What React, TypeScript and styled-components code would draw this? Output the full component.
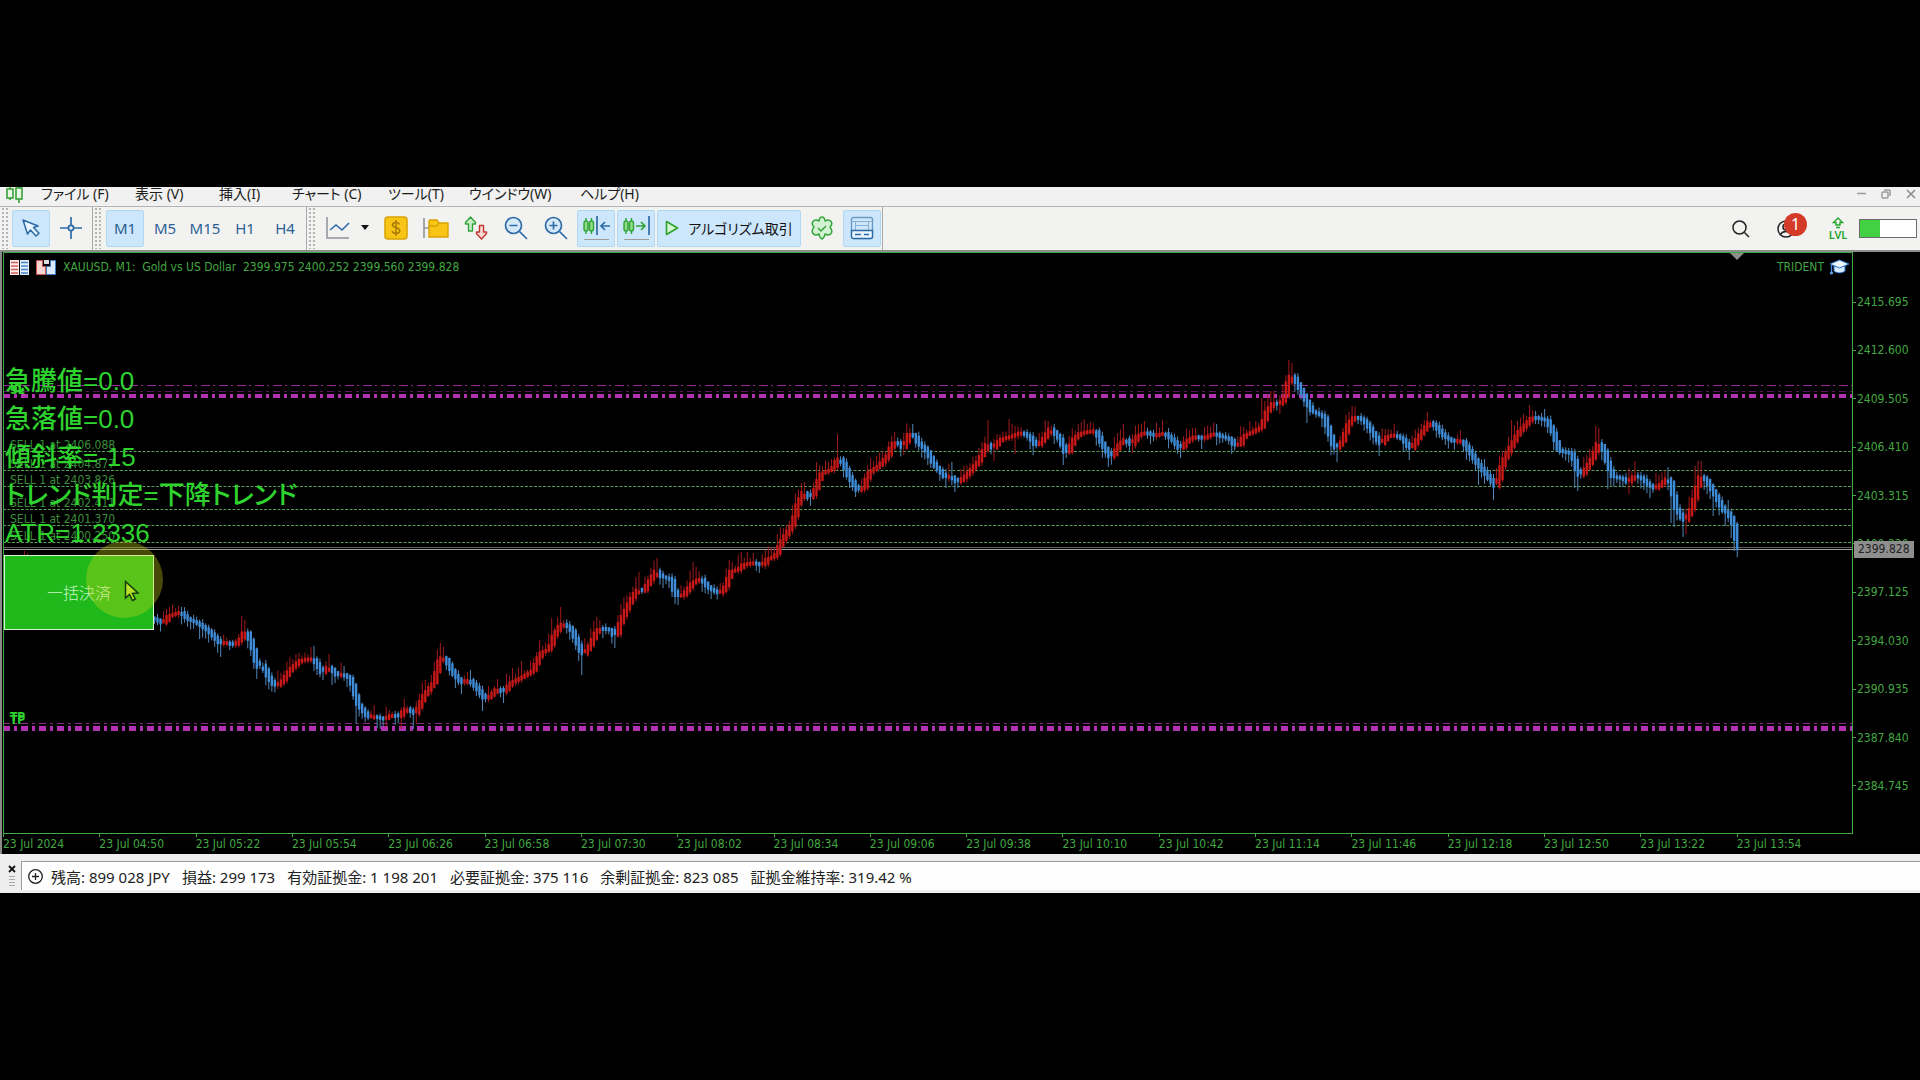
import React from 'react';
import styled, { createGlobalStyle } from 'styled-components';

const UI_FONT = `'Noto Sans', 'Noto Sans CJK JP', sans-serif`;
const CHART_FONT = `'DejaVu Sans Condensed', 'Noto Sans', 'Noto Sans CJK JP', sans-serif`;
const LABEL_FONT = `'Liberation Sans', 'Noto Sans CJK JP', sans-serif`;

const GlobalStyle = createGlobalStyle`
  * { box-sizing: border-box; }
  body { margin: 0; background: #000; }
  button { font: inherit; margin: 0; cursor: default; }
`;

const Page = styled.div`
  min-height: 100vh;
  display: flex;
  flex-direction: column;
  justify-content: center;
  background: #000;
  font-family: ${UI_FONT};
  overflow: hidden;
`;

const Terminal = styled.main`
  display: flex;
  flex-direction: column;
  background: #f0f0ef;
`;

/* ---------- menu ---------- */
const MenuBar = styled.header`
  display: flex;
  align-items: flex-start;
  height: 20px;
  padding: 0 4px 0 5px;
  border-bottom: 1px solid #b4b4b4;
  background: #f0f1f0;
`;

const MenuList = styled.nav`
  display: grid;
  flex: 1;
  grid-template-columns: 94px 84px 73px 96px 81px 111px auto;
  justify-content: start;
  justify-items: start;
  margin-left: 17px;
`;

const MenuItem = styled.button`
  border: 0;
  padding: 0;
  background: none;
  color: #1c1c1c;
  font-size: 14px;
  line-height: 14px;
  font-feature-settings: 'palt';
  white-space: pre;
`;

const WindowButtons = styled.div`
  display: flex;
  gap: 9px;
`;

const WindowButton = styled.button`
  display: flex;
  border: 0;
  padding: 0;
  background: none;
`;

/* ---------- toolbar ---------- */
const ToolBar = styled.div`
  display: flex;
  align-items: center;
  height: 43px;
  padding-right: 3px;
  background: #f2f2f1;
`;

const ToolGroup = styled.div<{ $lead: number; $tail: number }>`
  display: flex;
  align-items: center;
  gap: 2px;
  height: 43px;
  padding: 0 ${p => p.$tail}px 0 ${p => p.$lead}px;
  border-right: 1px solid #a9a9a9;
`;

const Grip = styled.span`
  width: 6px;
  height: 41px;
  margin-left: 2px;
  background-image: radial-gradient(circle at 1px 1px, #b5b5b5 1px, transparent 1px);
  background-size: 4px 4px;
`;

const ToolButton = styled.button<{ $active?: boolean; $w?: number }>`
  display: flex;
  align-items: center;
  justify-content: center;
  gap: 9px;
  width: ${p => p.$w ?? 38}px;
  height: 37px;
  padding: 0 0 2px;
  border: 1px solid ${p => (p.$active ? '#b3d8f3' : 'transparent')};
  border-radius: 2px;
  background: ${p => (p.$active ? '#cce6fb' : 'transparent')};
  color: #2c5f93;
  font-size: 15px;
  white-space: nowrap;
`;

const AlgoLabel = styled.span`
  color: #111;
  font-size: 14px;
  font-feature-settings: 'palt';
`;

const ToolRight = styled.div`
  display: flex;
  align-items: center;
  margin-left: auto;
`;

const PlainButton = styled.button<{ $w: number }>`
  position: relative;
  display: flex;
  justify-content: center;
  width: ${p => p.$w}px;
  padding: 0;
  border: 0;
  background: none;
`;

const Badge = styled.span`
  position: absolute;
  left: 23px;
  top: -7px;
  width: 23px;
  height: 23px;
  border-radius: 50%;
  background: #d43a27;
  color: #fff;
  font-size: 16px;
  line-height: 23px;
  text-align: center;
`;

const Level = styled.div`
  display: flex;
  flex-direction: column;
  align-items: center;
  width: 42px;
  color: #25a52c;
  font-size: 11px;
  font-weight: 600;
  line-height: 11px;
`;

const Meter = styled.div`
  width: 58px;
  height: 19px;
  border: 1px solid #6c6c6c;
  background: linear-gradient(to right, #42d142 36%, #fff 36%);
`;

/* ---------- chart ---------- */
const ChartWindow = styled.section`
  display: grid;
  grid-template-columns: 1fr 67px;
  padding-left: 3px;
  border-top: 2px solid #8b8f8b;
  background: #000;
  color: #43a843;
  font-family: ${CHART_FONT};
  font-size: 12px;
  box-shadow: inset 2px 0 0 #8a8a8a;
`;

const Plot = styled.div`
  position: relative;
  height: 582px;
  border: 1px solid #43a843;
`;

const PlotSvg = styled.svg`
  display: block;
  width: 100%;
  height: 100%;
`;

const PlotHeader = styled.div`
  position: absolute;
  inset: 3px 3px auto 6px;
  display: flex;
  align-items: center;
  gap: 7px;
  height: 22px;
  white-space: pre;
`;

const ExpertName = styled.span`
  display: flex;
  align-items: center;
  gap: 5px;
  margin-left: auto;
`;

const ShiftMark = styled.span`
  position: absolute;
  right: 108px;
  top: 0;
  border: 7px solid transparent;
  border-top-color: #8a8f8a;
  border-bottom: 0;
`;

const OrderLabel = styled.span<{ $y: number }>`
  position: absolute;
  left: 6px;
  top: ${p => p.$y}px;
  color: #3c8c3c;
  line-height: 16px;
`;

const StopLabel = styled.span<{ $x: number; $y: number }>`
  position: absolute;
  left: ${p => p.$x}px;
  top: ${p => p.$y}px;
  color: #2fd02f;
  font-weight: 700;
  line-height: 14px;
  text-shadow: 0 3px 0 #2fd02f;
`;

const Indicators = styled.ul`
  position: absolute;
  left: 1px;
  top: 109px;
  margin: 0;
  padding: 0;
  list-style: none;
  color: #2ed32e;
  font-family: ${LABEL_FONT};
  font-size: 26px;
  font-weight: 500;
  line-height: 38px;
  font-feature-settings: 'palt';
  white-space: nowrap;
`;

const CloseAll = styled.button`
  position: absolute;
  left: 0;
  top: 302px;
  width: 150px;
  height: 75px;
  padding-bottom: 3px;
  border: 1px solid #d9f3d9;
  background: #1fb91c;
  color: #c9f5c9;
  font-family: ${LABEL_FONT};
  font-size: 16px;
  font-weight: 300;
`;

const PointerHalo = styled.div`
  position: absolute;
  left: 82px;
  top: 288px;
  width: 77px;
  height: 77px;
  border-radius: 50%;
  background: rgba(205, 215, 20, 0.34);
  pointer-events: none;
`;

const Pointer = styled.svg`
  position: absolute;
  left: 120px;
  top: 327px;
`;

const PriceAxis = styled.div`
  position: relative;
  display: flex;
  flex-direction: column;
  justify-content: space-between;
  height: 582px;
  padding: 42px 0 40px;
`;

const PriceTick = styled.span`
  display: flex;
  align-items: center;
  gap: 1px;
  line-height: 16px;
  &::before {
    content: '';
    width: 3px;
    height: 1px;
    background: #43a843;
  }
`;

const LastPrice = styled.span`
  position: absolute;
  left: 1px;
  top: 289px;
  padding: 0 4px;
  background: #8e8e8e;
  color: #222;
  line-height: 17px;
`;

const TimeAxis = styled.div`
  display: grid;
  grid-template-columns: repeat(19, 1fr);
  margin-right: 20px;
  height: 20px;
`;

const TimeTick = styled.span`
  position: relative;
  line-height: 20px;
  white-space: nowrap;
  &::before {
    content: '';
    position: absolute;
    left: 0;
    top: 0;
    width: 1px;
    height: 3px;
    background: #43a843;
  }
`;

/* ---------- status ---------- */
const StatusBar = styled.footer`
  display: flex;
  padding: 7px 0 3px;
  background: #eeeeee;
`;

const StatusHandle = styled.div`
  display: flex;
  flex-direction: column;
  align-items: center;
  gap: 3px;
  width: 21px;
  padding: 4px 0 0 2px;
`;

const StatusGrip = styled.span`
  width: 6px;
  height: 11px;
  background: repeating-linear-gradient(#aaa 0 1px, transparent 1px 3px);
`;

const StatusFields = styled.div`
  display: flex;
  flex: 1;
  align-items: center;
  gap: 8px;
  height: 29px;
  padding-left: 6px;
  border-top: 1px solid #9c9c9c;
  border-left: 1px solid #9c9c9c;
  background: #fefefe;
  color: #222;
  font-size: 15px;
  white-space: nowrap;
`;

const AccountFigures = styled.div`
  display: flex;
  gap: 12px;
`;

/* ---------- data ---------- */
const menus = ['ファイル (F)', '表示 (V)', '挿入(I)', 'チャート (C)', 'ツール(T)', 'ウインドウ(W)', 'ヘルプ(H)'];
const periods = ['M1', 'M5', 'M15', 'H1', 'H4'];
const prices = ['2415.695', '2412.600', '2409.505', '2406.410', '2403.315', '2400.220', '2397.125', '2394.030', '2390.935', '2387.840', '2384.745'];
const times = ['2024', '04:50', '05:22', '05:54', '06:26', '06:58', '07:30', '08:02', '08:34', '09:06', '09:38', '10:10', '10:42', '11:14', '11:46', '12:18', '12:50', '13:22', '13:54'];
const orders: [string, number, number][] = [
  ['2406.088', 184, 198],
  ['2404.877', 203, 217],
  ['2403.826', 219, 233],
  ['2402.411', 242, 256],
  ['2401.370', 258, 272],
  ['2400.250', 275, 289],
];
const indicators = ['急騰値=0.0', '急落値=0.0', '傾斜率=-15', 'トレンド判定=下降トレンド', 'ATR=1.2336'];
const account = ['残高: 899 028 JPY', '損益: 299 173', '有効証拠金: 1 198 201', '必要証拠金: 375 116', '余剰証拠金: 823 085', '証拠金維持率: 319.42 %'];

/* Turning points of the price curve: x, y pairs. */
const curve = [
  148, 616, 155, 618, 163, 623, 168, 615, 180, 611, 187, 618, 197, 622, 208, 630, 220, 643, 227, 641, 233, 645, 240, 638, 244, 630, 247, 632, 252, 647,
  257, 668, 262, 663, 268, 677, 275, 686, 282, 680, 290, 668, 300, 659, 313, 658, 322, 673, 328, 665, 337, 675, 343, 673, 350, 678, 357, 703,
  368, 717, 373, 715, 378, 717, 385, 718, 392, 713, 398, 717, 405, 707, 415, 713, 423, 695, 433, 682, 440, 655, 445, 658, 453, 673, 462, 683,
  468, 678, 477, 688, 485, 699, 492, 693, 497, 687, 503, 692, 510, 682, 520, 677, 532, 670, 540, 652, 549, 648, 553, 635, 561, 622, 570, 627,
  577, 643, 582, 655, 588, 647, 597, 628, 610, 628, 615, 638, 620, 620, 630, 599, 637, 588, 642, 592, 647, 583, 656, 569, 660, 576, 670, 577,
  675, 595, 682, 595, 692, 582, 700, 577, 708, 587, 720, 593, 725, 585, 730, 570, 738, 569, 743, 563, 757, 562, 762, 565, 767, 558, 775, 555,
  780, 542, 792, 523, 797, 503, 803, 491, 810, 498, 815, 488, 820, 473, 832, 468, 838, 456, 843, 463, 848, 475, 857, 490, 863, 487, 868, 472,
  878, 465, 887, 455, 892, 442, 898, 441, 903, 448, 908, 433, 913, 433, 918, 443, 925, 448, 933, 463, 945, 477, 950, 475, 957, 482, 967, 473,
  978, 460, 987, 442, 993, 448, 1000, 438, 1010, 436, 1021, 431, 1029, 436, 1036, 446, 1043, 438, 1050, 427, 1059, 438, 1066, 455, 1073, 438,
  1080, 432, 1095, 430, 1102, 444, 1111, 458, 1118, 444, 1125, 438, 1131, 444, 1137, 435, 1145, 431, 1154, 435, 1164, 432, 1173, 440, 1180, 449,
  1186, 440, 1195, 435, 1202, 438, 1214, 432, 1221, 436, 1229, 437, 1234, 445, 1239, 444, 1243, 435, 1252, 431, 1261, 426, 1266, 411, 1273, 401,
  1279, 404, 1284, 397, 1289, 374, 1293, 376, 1298, 385, 1305, 399, 1311, 410, 1323, 415, 1329, 433, 1334, 449, 1341, 442, 1348, 422, 1355, 415,
  1364, 420, 1373, 433, 1380, 444, 1387, 435, 1395, 434, 1402, 438, 1410, 449, 1418, 436, 1429, 421, 1434, 424, 1443, 435, 1454, 441, 1461, 439,
  1468, 449, 1477, 463, 1486, 474, 1496, 487, 1502, 461, 1511, 444, 1518, 431, 1532, 416, 1546, 419, 1552, 431, 1559, 451, 1567, 451, 1572, 453,
  1575, 467, 1580, 476, 1587, 465, 1593, 455, 1597, 442, 1602, 445, 1607, 463, 1612, 476, 1622, 477, 1628, 482, 1633, 475, 1640, 476, 1647, 483,
  1655, 488, 1667, 477, 1671, 483, 1674, 505, 1680, 515, 1684, 521, 1690, 510, 1695, 493, 1699, 475, 1705, 478, 1715, 495, 1723, 510, 1728, 512,
  1733, 524, 1737, 546, 1742, 552,
];

/* Long shadows: x, y of the tip. */
const spikes = [
  169, 607, 180, 607, 198, 639, 220, 657, 229, 650, 241, 616, 245, 626, 257, 679, 274, 690, 297, 653, 313, 646, 328, 654, 332, 685, 343, 666,
  356, 724, 374, 705, 378, 728, 386, 727, 402, 729, 404, 699, 412, 729, 417, 724, 439, 643, 461, 694, 469, 670, 483, 711, 497, 679, 503, 703,
  521, 661, 551, 618, 561, 607, 581, 675, 597, 620, 613, 648, 638, 572, 656, 558, 662, 588, 676, 604, 692, 562, 699, 571, 718, 598, 728, 560,
  740, 552, 752, 553, 765, 550, 785, 530, 801, 483, 810, 506, 816, 462, 837, 434, 855, 497, 870, 458, 891, 436, 904, 455, 907, 424, 911, 424,
  946, 488, 951, 462, 955, 492, 988, 420, 993, 461, 1008, 419, 1014, 454, 1033, 455, 1049, 421, 1063, 465, 1078, 424, 1094, 425, 1108, 467,
  1124, 424, 1132, 453, 1144, 421, 1162, 429, 1180, 458, 1202, 449, 1216, 424, 1232, 454, 1262, 398, 1271, 391, 1279, 414, 1289, 360, 1292, 363,
  1307, 423, 1331, 455, 1337, 462, 1354, 409, 1379, 456, 1394, 424, 1408, 460, 1427, 416, 1459, 431, 1466, 458, 1478, 485, 1484, 459, 1493, 500,
  1511, 420, 1524, 414, 1529, 405, 1536, 411, 1544, 409, 1575, 488, 1578, 491, 1596, 426, 1599, 428, 1607, 489, 1628, 494, 1634, 461, 1650, 498,
  1667, 467, 1671, 523, 1674, 527, 1683, 537, 1686, 534, 1695, 466, 1698, 461, 1701, 461, 1713, 516, 1725, 526, 1728, 500, 1731, 538, 1734, 551,
  1737, 553,
];

const valueAt = (x: number) => {
  for (let i = 2; i < curve.length; i += 2) {
    if (x <= curve[i]) {
      const t = (x - curve[i - 2]) / (curve[i] - curve[i - 2]);
      return curve[i - 1] + t * (curve[i + 1] - curve[i - 1]);
    }
  }
  return curve[curve.length - 1];
};

const noise = (n: number) => {
  const s = Math.sin(n * 12.9898) * 43758.5453;
  return s - Math.floor(s);
};

const STEP = 3.009;
const candles = Array.from({ length: 527 }, (_, i) => {
  const x = 154 + i * STEP;
  const open = valueAt(x - 4);
  const close = valueAt(x + 2);
  const up = close < open;
  const mid = (open + close) / 2 + 1;
  const half = Math.max(Math.abs(open - close) / 2 + 1, 2);
  let high = mid - half - (up ? 2 + noise(i) * 10 : noise(i) * 4);
  let low = mid + half + (up ? noise(i + 900) * 3 : 1 + noise(i + 900) * 8);
  for (let k = 0; k < spikes.length; k += 2) {
    if (Math.abs(spikes[k] - x) <= STEP / 2) {
      high = Math.min(high, spikes[k + 1]);
      low = Math.max(low, spikes[k + 1]);
    }
  }
  return { x, up, top: mid - half, height: half * 2, high, low };
});

/* ---------- icons ---------- */
const BLUE = '#2d6ba6';

const LogoIcon = () => (
  <svg width="19" height="18" viewBox="0 0 19 18" fill="#e7f7e4" stroke="#38a13a" strokeWidth="1.6">
    <path d="M5 0v3M5 10v3M14 0v1M14 12v4" />
    <rect x="2" y="2" width="6" height="9" />
    <rect x="11" y="1" width="6" height="11" />
  </svg>
);
const CursorIcon = () => (
  <svg width="20" height="20" viewBox="0 0 20 20" fill="#eaf5fd" stroke={BLUE} strokeWidth="1.5" strokeLinejoin="round">
    <path d="M2 2l4.500 14 3-4 5.500 6 3-2.800-5.500-5.700 4.500-1.500z" />
  </svg>
);
const CrossIcon = () => (
  <svg width="24" height="24" viewBox="0 0 24 24" fill="none" stroke={BLUE} strokeWidth="1.7">
    <path d="M12 1v8M12 15v8M1 12h8M15 12h8" />
    <circle cx="12" cy="12" r="2.600" />
  </svg>
);
const LineChartIcon = () => (
  <svg width="44" height="24" viewBox="0 0 44 24" fill="none">
    <path d="M2 1v21h22" stroke="#8d9499" strokeWidth="1.500" />
    <path d="M5 14l6-5 6 5 7-7" stroke={BLUE} strokeWidth="1.600" />
    <path d="M36 9h8l-4 5z" fill="#111" />
  </svg>
);
const DollarIcon = () => (
  <svg width="24" height="24" viewBox="0 0 24 24">
    <rect x="1" y="1" width="22" height="22" rx="3" fill="#f8c516" stroke="#d9a300" strokeWidth="1.500" />
    <path d="M15.500 8.500c-.5-1.500-1.800-2-3.500-2-2 0-3.500.8-3.500 2.600 0 3.600 7.300 1.800 7.300 5.500 0 1.900-1.700 2.900-3.800 2.900-2 0-3.500-.8-4-2.500M12 4v16" fill="none" stroke="#a87b08" strokeWidth="1.500" />
  </svg>
);
const FolderIcon = () => (
  <svg width="26" height="22" viewBox="0 0 26 22">
    <path d="M1 1v20M1 11h5" stroke="#8d9499" strokeWidth="1.600" />
    <path d="M6 4l1-1h7l2 3h9v14H6z" fill="#f8c516" stroke="#d9a300" strokeWidth="1.400" />
    <path d="M6 9h8l2-3" fill="none" stroke="#c59205" />
  </svg>
);
const ArrowsIcon = () => (
  <svg width="24" height="24" viewBox="0 0 24 24" strokeWidth="1.400" strokeLinejoin="round">
    <path d="M6.500 1l5 5.500v1.500H8.500V15H4.500V8H1.500V6.500z" fill="#c5efc5" stroke="#35a33a" />
    <path d="M17.500 23l-5-5.500V16h3V9.500h4V16h3v1.500z" fill="#fbdcd9" stroke="#c4352c" />
  </svg>
);
const ZoomIcon = ({ plus }: { plus?: boolean }) => (
  <svg width="24" height="24" viewBox="0 0 24 24" stroke={BLUE} strokeWidth="1.700">
    <circle cx="9.500" cy="9.500" r="8" fill="#d5e9f8" />
    <path d={`M15.500 15.500L23 23M5.500 9.500h8${plus ? 'M9.500 5.500v8' : ''}`} />
  </svg>
);
const ShiftIcon = ({ end }: { end?: boolean }) => (
  <svg width="28" height="26" viewBox="0 0 28 26" fill="#8fdc83" stroke="#2fa334" strokeWidth="1.400">
    <path d="M4 3v3M4 16v3M9.500 3v3M9.500 16v3" />
    <rect x="2" y="6" width="4" height="10" rx="2" />
    <rect x="7.500" y="6" width="4" height="10" rx="2" />
    {end ? (
      <>
        <path d="M14 11h9M19 7l4 4-4 4" fill="none" strokeWidth="1.700" />
        <path d="M27 1v19" stroke={BLUE} strokeWidth="1.700" />
      </>
    ) : (
      <path d="M15 1v19M28 11h-9M23 7l-4 4 4 4" stroke={BLUE} fill="none" strokeWidth="1.700" />
    )}
    <path d="M2 24.500h25" stroke="#a09a98" strokeWidth="1" />
  </svg>
);
const PlayIcon = () => (
  <svg width="14" height="16" viewBox="0 0 14 16">
    <path d="M1.500 1.500l11 6.500-11 6.500z" fill="#d5f6cf" stroke="#2fa334" strokeWidth="1.600" strokeLinejoin="round" />
  </svg>
);
const VpsIcon = () => (
  <svg width="24" height="24" viewBox="0 0 24 24" fill="#d3f2d3" stroke="#35a63b" strokeWidth="1.500" strokeLinejoin="round">
    <path d="M12 1q2.500 0 3 4q4-2 6 .5t-1 5.500q3 4 1 6.500t-6 .5q-.5 4-3 5q-2.500-1-3-5q-4 2-6-.5t1-6.500q-3-3-1-5.500t6-.5q.5-4 3-4z" />
    <path d="M8 12l3 3 5-5" fill="none" />
  </svg>
);
const PanelIcon = () => (
  <svg width="24" height="24" viewBox="0 0 24 24" fill="none" stroke={BLUE} strokeWidth="1.400">
    <rect x="1.500" y="1.500" width="21" height="21" rx="2" fill="#cfe6f8" stroke="#6c9cc6" />
    <path d="M2 5.500h20M5.500 6v8M18.500 6v8M6 9.500h12" stroke="#86b2d8" strokeWidth="1" />
    <path d="M1.500 14.500h21v6a2 2 0 0 1-2 2h-17a2 2 0 0 1-2-2z" fill="#e8f4fd" />
    <path d="M5 18.500h6M14 18.500h5" />
  </svg>
);
const DepthIcon = () => (
  <svg width="19" height="15" viewBox="0 0 19 15">
    <rect width="9" height="15" fill="#fbeae8" />
    <rect x="10" width="9" height="15" fill="#e3effc" />
    <path d="M1 2.500h7M1 6h7M1 9.500h7M1 13h7" stroke="#d0605a" strokeWidth="1.400" />
    <path d="M11 2.500h7M11 6h7M11 9.500h7M11 13h7" stroke="#4a86c8" strokeWidth="1.400" />
  </svg>
);
const TradeIcon = () => (
  <svg width="20" height="15" viewBox="0 0 20 15">
    <path d="M.5.500h6v6h3v8h-9z" fill="#f8d5d2" stroke="#d0524a" />
    <path d="M19.500.500h-5v6h-4v8h9z" fill="#dbeafb" stroke="#3a7bc4" />
    <rect x="8" y="0" width="5" height="4" fill="#ddd" />
  </svg>
);
const HatIcon = () => (
  <svg width="20" height="16" viewBox="0 0 20 16">
    <path d="M5 7v5c3 2.500 8 2.500 11 0V7z" fill="#d8ecff" stroke="#2d74c9" />
    <path d="M10.500 1L20 5l-9.500 4L1 5z" fill="#eaf5ff" stroke="#2d74c9" />
    <path d="M2.500 6v7" stroke="#3f8be0" strokeWidth="1.300" />
    <circle cx="2.500" cy="14" r="1.600" fill="#5fa5ee" />
  </svg>
);

const CHART_TOP = 253;
const CHART_LEFT = 4;

const PriceChart = () => (
  <PlotSvg viewBox={`${CHART_LEFT} ${CHART_TOP} 1848 580`} preserveAspectRatio="none" role="img" aria-label="XAUUSD M1">
    <g stroke="#b232b2" fill="none">
      <path d="M3 385.500H1852" strokeDasharray="9 3 2 4" opacity=".85" />
      <path d="M3 391.500H1852" strokeDasharray="7 4 3 4" opacity=".5" />
      <path d="M3 396H1852" strokeWidth="4" strokeDasharray="7 4 3 4" />
      <path d="M3 723.500H1852" strokeDasharray="7 4 3 4" opacity=".8" />
      <path d="M3 728.500H1852" strokeWidth="5" strokeDasharray="7 4 3 4" />
    </g>
    <g stroke="#549f54">
      {orders.map(([price, , line]) => (
        <path key={price} d={`M3 ${line + CHART_TOP + 0.5}H1852`} strokeDasharray="3 1.5" />
      ))}
    </g>
    <path d="M3 547.500H1852" stroke="#606060" />
    <path d="M3 549.500H1852" stroke="#a0a0a0" />
    <path d="M24.500 551v5M27.500 553v3" stroke="#8f1818" />
    {candles.map(c => (
      <g key={c.x}>
        <path d={`M${c.x + 0.5} ${c.high}V${c.low}`} stroke={c.up ? '#a31a1a' : '#5488b8'} />
        <rect x={c.x - 0.7} y={c.top} width="2.400" height={c.height} fill={c.up ? '#c81818' : '#3f8cd8'} />
      </g>
    ))}
  </PlotSvg>
);

export default function App() {
  return (
    <Page>
      <GlobalStyle />
      <Terminal>
        <MenuBar>
          <LogoIcon />
          <MenuList>
            {menus.map(m => (
              <MenuItem key={m}>{m}</MenuItem>
            ))}
          </MenuList>
          <WindowButtons>
            <WindowButton aria-label="最小化">
              <svg width="16" height="14" stroke="#9a9a9a"><path d="M7 6.500h9" strokeWidth="1.500" /></svg>
            </WindowButton>
            <WindowButton aria-label="元に戻す">
              <svg width="16" height="14" stroke="#9a9a9a" strokeWidth="1.500" fill="none">
                <rect x="7" y="5" width="6" height="6" rx="1" />
                <path d="M9 3h5a1 1 0 0 1 1 1v5" />
              </svg>
            </WindowButton>
            <WindowButton aria-label="閉じる">
              <svg width="16" height="14" stroke="#8a8a8a" strokeWidth="1.500"><path d="M7 3l8 8M15 3l-8 8" /></svg>
            </WindowButton>
          </WindowButtons>
        </MenuBar>

        <ToolBar>
          <Grip />
          <ToolGroup $lead={4} $tail={2}>
            <ToolButton $active aria-label="カーソル"><CursorIcon /></ToolButton>
            <ToolButton aria-label="十字線"><CrossIcon /></ToolButton>
          </ToolGroup>
          <Grip />
          <ToolGroup $lead={5} $tail={2}>
            {periods.map((p, i) => (
              <ToolButton key={p} $active={i === 0}>{p}</ToolButton>
            ))}
          </ToolGroup>
          <Grip />
          <ToolGroup $lead={4} $tail={1}>
            <ToolButton $w={56} aria-label="ラインチャート"><LineChartIcon /></ToolButton>
            <ToolButton aria-label="新規注文"><DollarIcon /></ToolButton>
            <ToolButton aria-label="フォルダ"><FolderIcon /></ToolButton>
            <ToolButton aria-label="売買"><ArrowsIcon /></ToolButton>
            <ToolButton aria-label="縮小"><ZoomIcon /></ToolButton>
            <ToolButton aria-label="拡大"><ZoomIcon plus /></ToolButton>
            <ToolButton $active aria-label="シフト"><ShiftIcon /></ToolButton>
            <ToolButton $active aria-label="自動スクロール"><ShiftIcon end /></ToolButton>
            <ToolButton $active $w={144}>
              <PlayIcon />
              <AlgoLabel>アルゴリズム取引</AlgoLabel>
            </ToolButton>
            <ToolButton aria-label="VPS"><VpsIcon /></ToolButton>
            <ToolButton $active aria-label="パネル"><PanelIcon /></ToolButton>
          </ToolGroup>
          <ToolRight>
            <PlainButton $w={40} aria-label="検索">
              <svg width="18" height="18" viewBox="0 0 18 18" fill="none" stroke="#222" strokeWidth="1.500">
                <circle cx="7.500" cy="7.500" r="6.500" />
                <path d="M12.500 12.500L17 17" />
              </svg>
            </PlainButton>
            <PlainButton $w={56} aria-label="アカウント">
              <svg width="24" height="18" viewBox="0 0 24 18" fill="none" stroke="#222" strokeWidth="1.500">
                <circle cx="9" cy="9" r="8" />
                <circle cx="9" cy="7" r="3" />
                <path d="M3.500 14.500c2-4 9-4 11 0" />
              </svg>
              <Badge>1</Badge>
            </PlainButton>
            <Level>
              <svg width="12" height="12" viewBox="0 0 12 12" fill="none" stroke="#25a52c" strokeWidth="1.400">
                <path d="M6 1l4.500 4.500H8V8H4V5.500H1.500zM4 10.500h4" />
              </svg>
              LVL
            </Level>
            <Meter />
          </ToolRight>
        </ToolBar>

        <ChartWindow>
          <Plot>
            <PriceChart />
            <ShiftMark />
            <PlotHeader>
              <DepthIcon />
              <TradeIcon />
              <span>XAUUSD, M1:  Gold vs US Dollar  2399.975 2400.252 2399.560 2399.828</span>
              <ExpertName>
                TRIDENT
                <HatIcon />
              </ExpertName>
            </PlotHeader>
            {orders.map(([price, y]) => (
              <OrderLabel key={price} $y={y}>SELL 1 at {price}</OrderLabel>
            ))}
            <StopLabel $x={6} $y={127}>SL</StopLabel>
            <StopLabel $x={6} $y={457}>TP</StopLabel>
            <Indicators>
              {indicators.map(t => (
                <li key={t}>{t}</li>
              ))}
            </Indicators>
            <CloseAll>一括決済</CloseAll>
            <PointerHalo />
            <Pointer width="16" height="22" viewBox="0 0 16 22">
              <path d="M1.500 1.500v16.500l4-3.500 3 6 2.800-1.300-2.800-5.700 5.500-.5z" fill="#b5e02a" stroke="#123d0c" strokeWidth="1.500" />
            </Pointer>
          </Plot>
          <PriceAxis>
            {prices.map(p => (
              <PriceTick key={p}>{p}</PriceTick>
            ))}
            <LastPrice>2399.828</LastPrice>
          </PriceAxis>
          <TimeAxis>
            {times.map(t => (
              <TimeTick key={t}>23 Jul {t}</TimeTick>
            ))}
          </TimeAxis>
        </ChartWindow>

        <StatusBar>
          <StatusHandle>
            <svg width="8" height="8" stroke="#111" strokeWidth="1.800"><path d="M1 1l6 6M7 1l-6 6" /></svg>
            <StatusGrip />
          </StatusHandle>
          <StatusFields>
            <svg width="15" height="15" viewBox="0 0 15 15" fill="none" stroke="#222" strokeWidth="1.300">
              <circle cx="7.500" cy="7.500" r="6.800" />
              <path d="M7.500 4v7M4 7.500h7" />
            </svg>
            <AccountFigures>
              {account.map(a => (
                <span key={a}>{a}</span>
              ))}
            </AccountFigures>
          </StatusFields>
        </StatusBar>
      </Terminal>
    </Page>
  );
}
